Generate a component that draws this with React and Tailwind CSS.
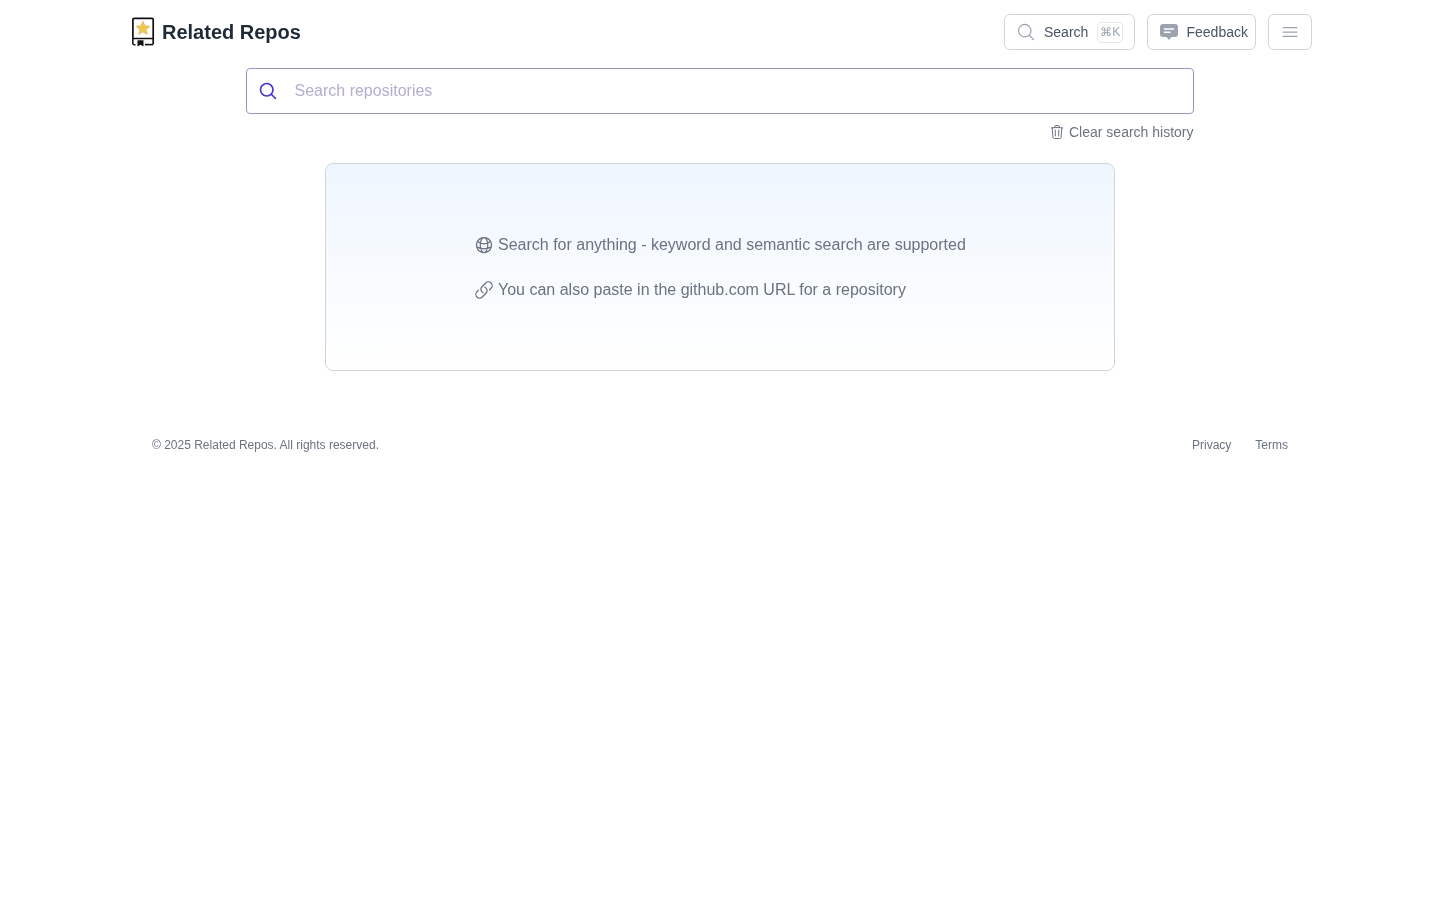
import React from 'react';

const font = { fontFamily: '"Liberation Sans", Arial, sans-serif' };

// heroicons-style outline icon
function Outline({ d, className, width = 1.5 }) {
  return (
    <svg viewBox="0 0 24 24" fill="none" stroke="currentColor" strokeWidth={width} strokeLinecap="round" strokeLinejoin="round" className={className}>
      <path d={d} />
    </svg>
  );
}

const SEARCH = 'm21 21-5.197-5.197m0 0A7.5 7.5 0 1 0 5.196 5.196a7.5 7.5 0 0 0 10.607 10.607Z';
const TRASH = 'm14.74 9-.346 9m-4.788 0L9.26 9m9.968-3.21c.342.052.682.107 1.022.166m-1.022-.165L18.16 19.673a2.25 2.25 0 0 1-2.244 2.077H8.084a2.25 2.25 0 0 1-2.244-2.077L4.772 5.79m14.456 0a48.108 48.108 0 0 0-3.478-.397m-12 .562c.34-.059.68-.114 1.022-.165m0 0a48.11 48.11 0 0 1 3.478-.397m7.5 0v-.916c0-1.18-.91-2.164-2.09-2.201a51.964 51.964 0 0 0-3.32 0c-1.18.037-2.09 1.022-2.09 2.201v.916m7.5 0a48.667 48.667 0 0 0-7.5 0';
const GLOBE = 'M12 21a9.004 9.004 0 0 0 8.716-6.747M12 21a9.004 9.004 0 0 1-8.716-6.747M12 21c2.485 0 4.5-4.03 4.5-9S14.485 3 12 3m0 18c-2.485 0-4.5-4.03-4.5-9S9.515 3 12 3m0 0a8.997 8.997 0 0 1 7.843 4.582M12 3a8.997 8.997 0 0 0-7.843 4.582m15.686 0A11.953 11.953 0 0 1 12 10.5c-2.998 0-5.74-1.1-7.843-2.918m15.686 0A8.959 8.959 0 0 1 21 12c0 .778-.099 1.533-.284 2.253m0 0A17.919 17.919 0 0 1 12 16.5c-3.162 0-6.133-.815-8.716-2.247m0 0A9.015 9.015 0 0 1 3 12c0-1.605.42-3.113 1.157-4.418';
const LINK = 'M13.19 8.688a4.5 4.5 0 0 1 1.242 7.244l-4.5 4.5a4.5 4.5 0 0 1-6.364-6.364l1.757-1.757m13.35-.622 1.757-1.757a4.5 4.5 0 0 0-6.364-6.364l-4.5 4.5a4.5 4.5 0 0 0 1.242 7.244';
const BARS = 'M3.75 6.75h16.5M3.75 12h16.5m-16.5 5.25h16.5';

function Logo() {
  return (
    <svg viewBox="0 0 24 30" className="h-[30px] w-6" fill="none">
      <path d="M1.9 22V2.5A1.2 1.2 0 0 1 3.1 1.3H21a1.2 1.2 0 0 1 1.2 1.2V27.2" stroke="#111" strokeWidth="1.7" />
      <path d="M4.5 27.8H3.4a1.6 1.6 0 0 1-1.6-1.6V23.2a1.6 1.6 0 0 1 1.6-1.6H22.2" stroke="#111" strokeWidth="1.5" />
      <path d="M14 27.6h8.2" stroke="#111" strokeWidth="1.6" />
      <path d="M6.5 23.2h6v6.3l-3-1.8-3 1.8Z" fill="#111" />
      <path d="M12 4.2l2 4.6 4.9.5-3.7 3.3 1.1 4.8-4.3-2.5-4.3 2.5 1.1-4.8-3.7-3.3 4.9-.5Z" fill="#eec94c" stroke="#cdb45a" strokeWidth=".6" />
    </svg>
  );
}

function ChatIcon() {
  return (
    <svg viewBox="0 0 20 20" className="h-5 w-5 text-[#9ca3af]">
      <path fill="currentColor" d="M4 2h12a3 3 0 0 1 3 3v7a3 3 0 0 1-3 3h-3.5L10 18l-2.5-3H4a3 3 0 0 1-3-3V5a3 3 0 0 1 3-3Z" />
      <path d="M5.5 7h9M5.5 10.2h5.5" stroke="#fff" strokeWidth="1.5" strokeLinecap="round" />
    </svg>
  );
}

export default function App() {
  return (
    <div style={font} className="min-h-screen will-change-transform">
      <div className="mx-auto w-[1184px]">
        <header className="flex h-16 items-center justify-between">
          <a className="ml-[3px] flex items-center gap-[7px]">
            <Logo />
            <span className="text-xl font-bold text-[#1f2937]">Related Repos</span>
          </a>
          <div className="flex items-center gap-3">
            <button className="flex h-9 w-[131px] items-center rounded-md border border-[#d1d5db] pl-[11px] text-sm text-[#4b5563]">
              <Outline d={SEARCH} className="h-5 w-5 text-[#9ca3af]" />
              <span className="ml-[7px] pl-[1px]">Search</span>
              <kbd style={font} className="ml-[9px] flex h-[21px] w-[26px] items-center justify-center rounded border border-[#e5e7eb] text-xs text-[#9ca3af]">⌘K</kbd>
            </button>
            <button className="flex h-9 w-[109px] items-center gap-[7.5px] rounded-md border border-[#d1d5db] pl-[11px] text-sm text-[#4b5563]">
              <ChatIcon />
              Feedback
            </button>
            <button className="flex h-9 w-11 items-center justify-center rounded-md border border-[#d1d5db]">
              <Outline d={BARS} className="h-5 w-5 text-[#9ca3af]" />
            </button>
          </div>
        </header>

        <main className="mx-auto mt-1 flex w-[948px] flex-col">
          <div className="flex h-[46px] items-center rounded border border-[#9a97bf] pl-[11px]">
            <Outline d={SEARCH} width={2} className="h-5 w-5 text-[#4338ca]" />
            <input
              style={font}
              readOnly
              placeholder="Search repositories"
              className="ml-[16.5px] flex-1 bg-transparent text-base text-[#111827] outline-none placeholder:text-[#b3afcf]"
            />
          </div>
          <div className="mt-2 flex h-5 items-center justify-end gap-1 text-sm text-[#6b7280]">
            <Outline d={TRASH} className="h-4 w-4" />
            <span className="pr-[0.5px]">Clear search history</span>
          </div>
          <div className="mx-auto mt-[21px] h-[208px] w-[790px] rounded-lg border border-[#d1d5db] bg-gradient-to-b from-[#eff6ff] to-white pl-[148px] pt-[69px] text-base text-[#6b7280]">
            <div className="flex flex-col gap-[21px]">
              <div className="flex h-6 items-center gap-[4px]">
                <Outline d={GLOBE} className="h-5 w-5" />
                Search for anything - keyword and semantic search are supported
              </div>
              <div className="flex h-6 items-center gap-[4px]">
                <Outline d={LINK} className="h-5 w-5" />
                You can also paste in the github.com URL for a repository
              </div>
            </div>
          </div>
        </main>

        <footer className="mt-[66px] flex items-center justify-between px-6 text-xs text-[#6b7280]">
          <span>© 2025 Related Repos. All rights reserved.</span>
          <div className="flex gap-6">
            <a>Privacy</a>
            <a>Terms</a>
          </div>
        </footer>
      </div>
    </div>
  );
}
